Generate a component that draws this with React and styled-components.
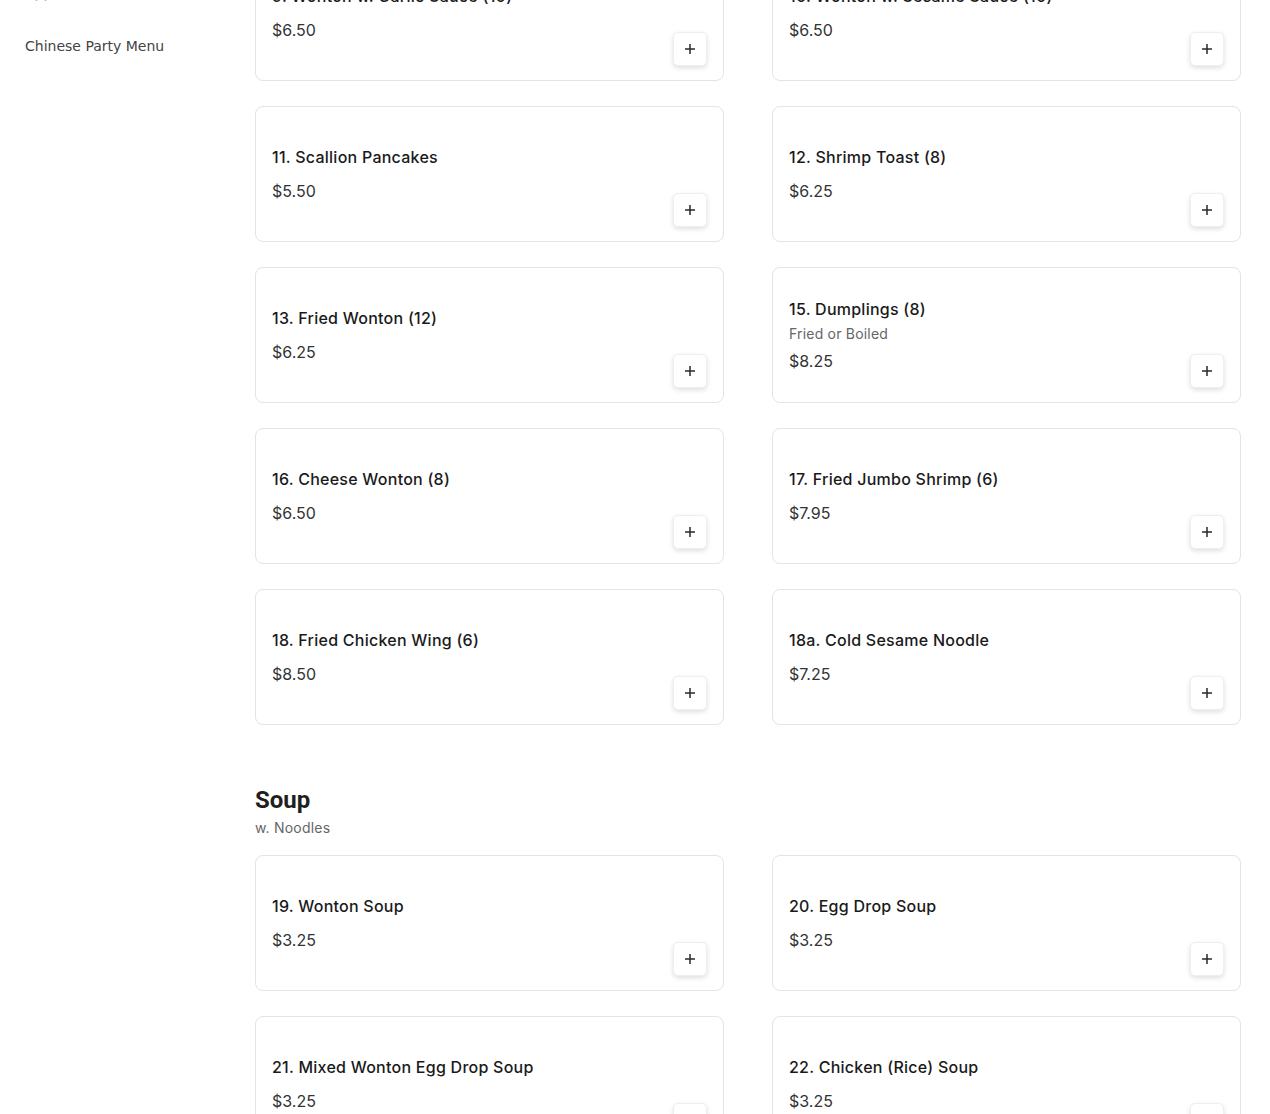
import React from "react";
import styled, { createGlobalStyle } from "styled-components";

const Global = createGlobalStyle`
  html, body { margin: 0; padding: 0; background: #fff; }
  body { font-family: "Inter", "Noto Sans", sans-serif; color: #222; }
  * { box-sizing: border-box; }
`;

const Page = styled.div`
  display: flex;
  margin-top: -55px;
  padding-right: 29px;
`;

const Sidebar = styled.nav`
  width: 255px;
  flex: none;
  padding: 24px 0 0 25px;
  display: flex;
  flex-direction: column;
`;

const SideItem = styled.a`
  font-family: "DejaVu Sans", sans-serif;
  font-size: 14px;
  line-height: 21px;
  padding: 14px 0;
  color: ${(p) => (p.$faint ? "#aaa" : "#444")};
  text-decoration: none;
  & + & {
    margin-top: 4px;
  }
`;

const Main = styled.main`
  flex: 1;
  min-width: 0;
`;

const Section = styled.section`
  & + & {
    margin-top: 61px;
  }
`;

const SectionTitle = styled.h2`
  font-family: "Roboto", "Liberation Sans", sans-serif;
  font-weight: 700;
  font-size: 24px;
  line-height: 28px;
  margin: 0;
  color: #1f1f1f;
`;

const SectionNote = styled.p`
  font-family: "Inter", sans-serif;
  font-size: 14px;
  line-height: 18px;
  margin: 5px 0 18px;
  color: #666;
  letter-spacing: 0.2px;
`;

const Grid = styled.div`
  display: grid;
  grid-template-columns: 1fr 1fr;
  column-gap: 48px;
  row-gap: 25px;
`;

const Card = styled.div`
  height: 136px;
  border: 1px solid #e4e4e4;
  border-radius: 8px;
  padding: 0 16px;
  display: flex;
  align-items: center;
  background: #fff;
`;

const Info = styled.div`
  flex: 1;
  min-width: 0;
`;

const Name = styled.h3`
  font-family: "Inter", sans-serif;
  font-weight: 500;
  font-size: 16px;
  line-height: 20px;
  margin: 0;
  color: #1a1a1a;
  letter-spacing: 0.25px;
`;

const Desc = styled.p`
  font-family: "Inter", sans-serif;
  font-size: 14px;
  line-height: 18px;
  margin: 6px 0 0;
  color: #666;
  letter-spacing: 0.2px;
`;

const Price = styled.div`
  font-family: "Inter", sans-serif;
  font-size: 16px;
  line-height: 20px;
  margin-top: 14px;
  color: #333;
  ${Desc} + & {
    margin-top: 8px;
  }
`;

const AddButton = styled.button`
  align-self: flex-end;
  margin-bottom: 14px;
  width: 34px;
  height: 34px;
  flex: none;
  border: 1px solid #efefef;
  border-radius: 5px;
  background: #fff;
  box-shadow: 0 2px 5px rgba(0, 0, 0, 0.13);
  display: flex;
  align-items: center;
  justify-content: center;
  padding: 0;
  cursor: pointer;
`;

const PlusIcon = () => (
  <svg width="12" height="12" viewBox="0 0 12 12" fill="none">
    <path d="M6 1v10M1 6h10" stroke="#2a2a2a" strokeWidth="1.5" />
  </svg>
);

const appetizers = [
  { name: "9. Wonton w. Garlic Sauce (10)", price: "$6.50" },
  { name: "10. Wonton w. Sesame Sauce (10)", price: "$6.50" },
  { name: "11. Scallion Pancakes", price: "$5.50" },
  { name: "12. Shrimp Toast (8)", price: "$6.25" },
  { name: "13. Fried Wonton (12)", price: "$6.25" },
  { name: "15. Dumplings (8)", desc: "Fried or Boiled", price: "$8.25" },
  { name: "16. Cheese Wonton (8)", price: "$6.50" },
  { name: "17. Fried Jumbo Shrimp (6)", price: "$7.95" },
  { name: "18. Fried Chicken Wing (6)", price: "$8.50" },
  { name: "18a. Cold Sesame Noodle", price: "$7.25" },
];

const soups = [
  { name: "19. Wonton Soup", price: "$3.25" },
  { name: "20. Egg Drop Soup", price: "$3.25" },
  { name: "21. Mixed Wonton Egg Drop Soup", price: "$3.25" },
  { name: "22. Chicken (Rice) Soup", price: "$3.25" },
];

const ItemCard = ({ item }) => (
  <Card>
    <Info>
      <Name>{item.name}</Name>
      {item.desc && <Desc>{item.desc}</Desc>}
      <Price>{item.price}</Price>
    </Info>
    <AddButton aria-label="Add">
      <PlusIcon />
    </AddButton>
  </Card>
);

export default function App() {
  return (
    <>
      <Global />
      <Page>
        <Sidebar>
          <SideItem $faint>Appetizers</SideItem>
          <SideItem>Chinese Party Menu</SideItem>
        </Sidebar>
        <Main>
          <Section>
            <Grid>
              {appetizers.map((it) => (
                <ItemCard key={it.name} item={it} />
              ))}
            </Grid>
          </Section>
          <Section>
            <SectionTitle>Soup</SectionTitle>
            <SectionNote>w. Noodles</SectionNote>
            <Grid>
              {soups.map((it) => (
                <ItemCard key={it.name} item={it} />
              ))}
            </Grid>
          </Section>
        </Main>
      </Page>
    </>
  );
}
